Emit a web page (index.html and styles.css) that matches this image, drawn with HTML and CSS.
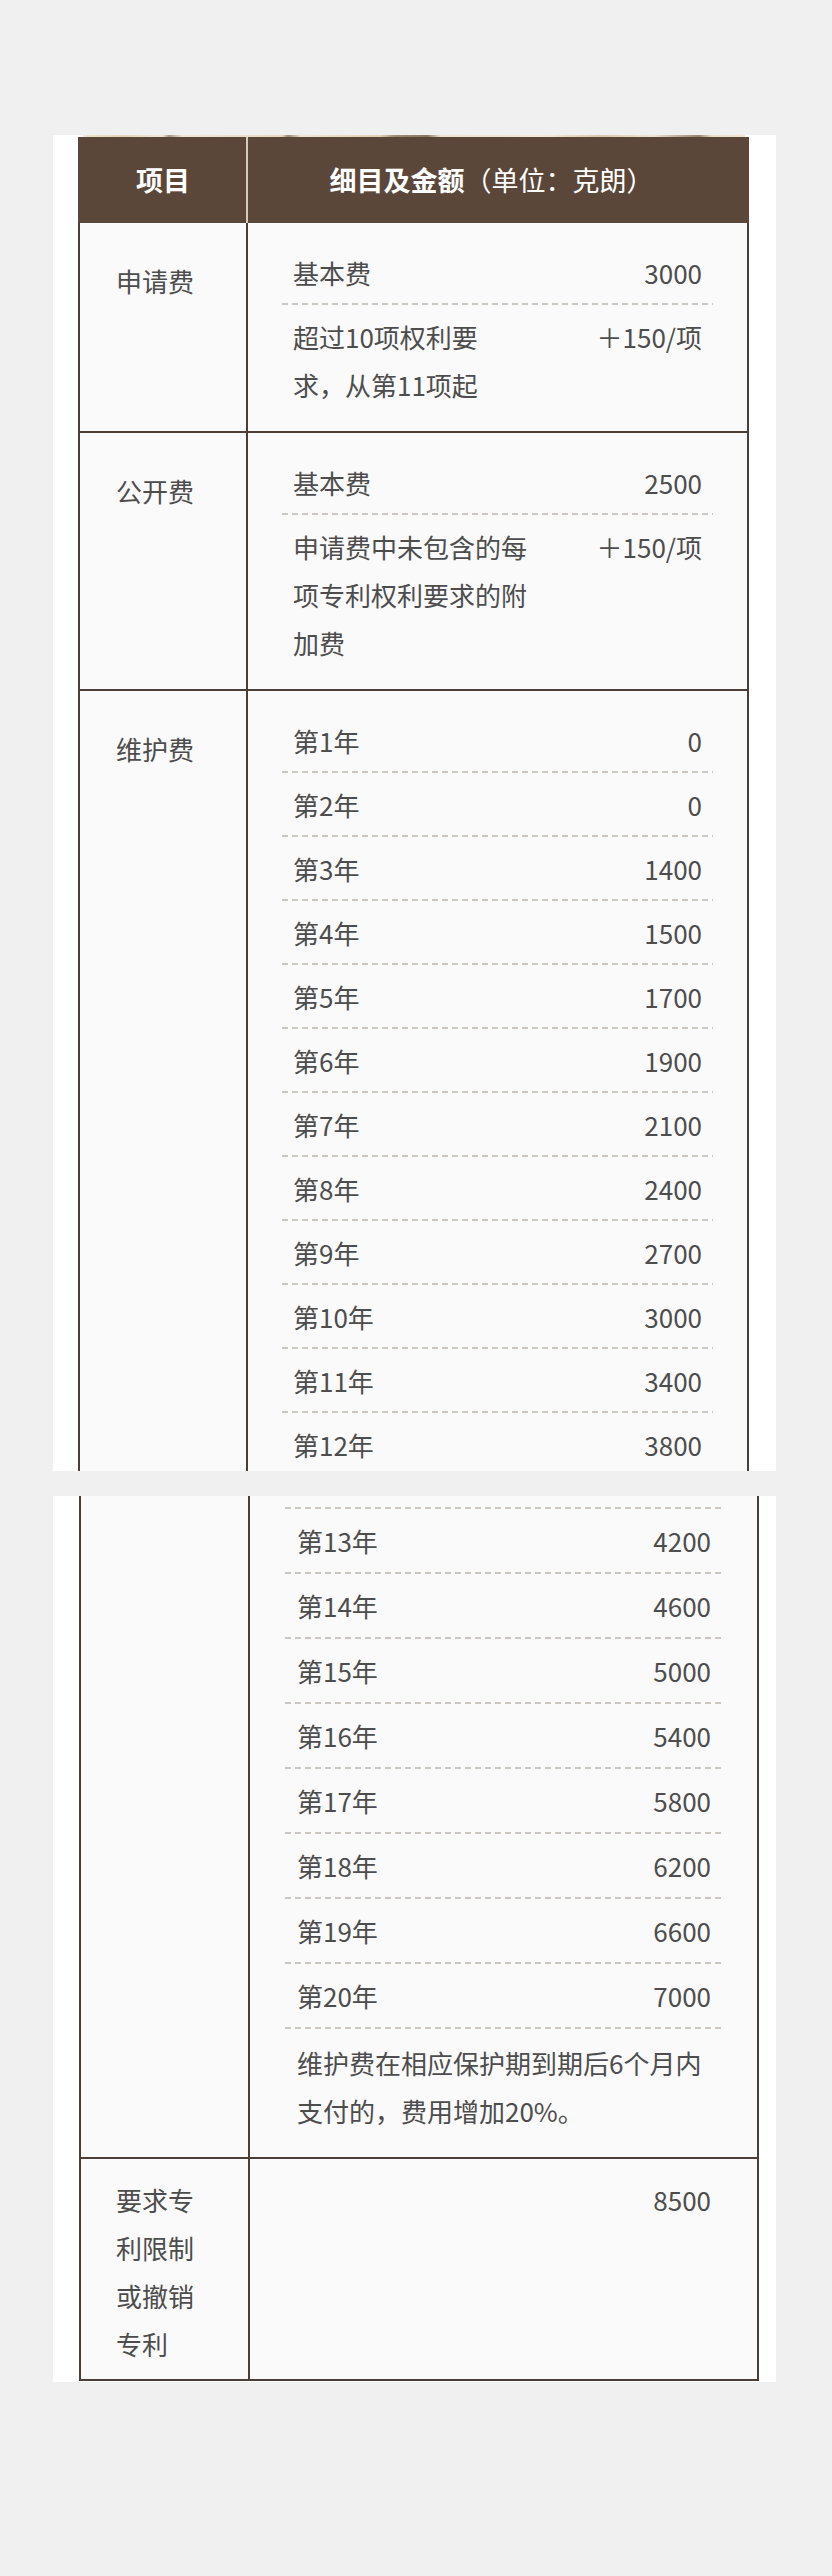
FILE: index.html
```html
<!DOCTYPE html>
<html lang="zh-CN">
<head>
<meta charset="utf-8">
<title>费用表</title>
<link rel="stylesheet" href="styles.css">
</head>
<body>
<div class="page">
  <section class="card card-top">
    <div class="strip"></div>
    <div class="table">
      <div class="thead">
        <div class="th th-item"><b>项目</b></div>
        <div class="th th-detail"><b>细目及金额</b><span class="unit">（单位：克朗）</span></div>
      </div>
      <div class="row">
        <div class="label">申请费</div>
        <div class="detail">
          <div class="item"><span class="name">基本费</span><span class="amount">3000</span></div>
          <div class="item"><span class="name">超过10项权利要<br>求，从第11项起</span><span class="amount">＋150/项</span></div>
        </div>
      </div>
      <div class="row">
        <div class="label">公开费</div>
        <div class="detail">
          <div class="item"><span class="name">基本费</span><span class="amount">2500</span></div>
          <div class="item"><span class="name">申请费中未包含的每<br>项专利权利要求的附<br>加费</span><span class="amount">＋150/项</span></div>
        </div>
      </div>
      <div class="row">
        <div class="label">维护费</div>
        <div class="detail">
          <div class="item"><span class="name">第1年</span><span class="amount">0</span></div>
          <div class="item"><span class="name">第2年</span><span class="amount">0</span></div>
          <div class="item"><span class="name">第3年</span><span class="amount">1400</span></div>
          <div class="item"><span class="name">第4年</span><span class="amount">1500</span></div>
          <div class="item"><span class="name">第5年</span><span class="amount">1700</span></div>
          <div class="item"><span class="name">第6年</span><span class="amount">1900</span></div>
          <div class="item"><span class="name">第7年</span><span class="amount">2100</span></div>
          <div class="item"><span class="name">第8年</span><span class="amount">2400</span></div>
          <div class="item"><span class="name">第9年</span><span class="amount">2700</span></div>
          <div class="item"><span class="name">第10年</span><span class="amount">3000</span></div>
          <div class="item"><span class="name">第11年</span><span class="amount">3400</span></div>
          <div class="item item-cut"><span class="name">第12年</span><span class="amount">3800</span></div>
        </div>
      </div>
    </div>
  </section>

  <section class="card card-bottom">
    <div class="table">
      <div class="row row-cont">
        <div class="label"></div>
        <div class="detail">
          <div class="dash-top"></div>
          <div class="item"><span class="name">第13年</span><span class="amount">4200</span></div>
          <div class="item"><span class="name">第14年</span><span class="amount">4600</span></div>
          <div class="item"><span class="name">第15年</span><span class="amount">5000</span></div>
          <div class="item"><span class="name">第16年</span><span class="amount">5400</span></div>
          <div class="item"><span class="name">第17年</span><span class="amount">5800</span></div>
          <div class="item"><span class="name">第18年</span><span class="amount">6200</span></div>
          <div class="item"><span class="name">第19年</span><span class="amount">6600</span></div>
          <div class="item"><span class="name">第20年</span><span class="amount">7000</span></div>
          <div class="note">维护费在相应保护期到期后6个月内<br>支付的，费用增加20%。</div>
        </div>
      </div>
      <div class="row row-last">
        <div class="label">要求专利限制或撤销专利</div>
        <div class="detail">
          <div class="item item-end"><span class="amount">8500</span></div>
        </div>
      </div>
    </div>
  </section>
</div>
</body>
</html>
```

FILE: styles.css
```css
* {
  box-sizing: border-box;
  margin: 0;
  padding: 0;
}

body {
  background: #f0f0f0;
  font-family: "Noto Sans CJK SC", "Noto Sans", sans-serif;
  color: #4d4d4d;
}

.page {
  padding-top: 135px;
  padding-bottom: 194px;
}

.card {
  margin-left: 53px;
  width: 723px;
  background: #ffffff;
}

.card-top {
  height: 1336px;
  overflow: hidden;
  padding-left: 25px;
}

.card-bottom {
  margin-top: 25px;
  padding-left: 26px;
  padding-bottom: 1px;
}

.strip {
  width: 662px;
  height: 2px;
  margin-left: 5px;
  background: linear-gradient(90deg,
    #efe4d2 0%, #e2d2b8 6%, #f3eadb 12%, #a89580 13%, #f1e7d6 15%,
    #e8dac4 30%, #9a8672 31%, #f1e6d4 33%, #e0cfb4 45%, #a08c78 47%,
    #8a7663 52%, #efe3cf 54%, #f3e9d8 70%, #d8c7ac 78%, #f1e6d4 86%,
    #96826f 93%, #ede0ca 95%, #efe4d2 100%);
}

.card-top .table {
  width: 671px;
}

.card-bottom .table {
  width: 680px;
}

.thead {
  display: flex;
  height: 86px;
  background: #5b4739;
  color: #ffffff;
}

.th {
  display: flex;
  align-items: center;
  justify-content: center;
  font-size: 27px;
  line-height: 48px;
}

.th-item {
  width: 170px;
  border-right: 2px solid #d9cbbb;
  padding-left: 2px;
}

.th-detail {
  flex: 1;
  padding-right: 14px;
}

.th b {
  font-weight: 700;
}

.unit {
  font-weight: 400;
}

.row {
  display: flex;
  background: #fafafa;
  border-left: 2px solid #4b3e36;
  border-right: 2px solid #4b3e36;
  border-bottom: 2px solid #4b3e36;
}

.label {
  width: 168px;
  flex: none;
  border-right: 2px solid #4b3e36;
  padding: 34px 40px 0 36px;
  font-size: 26px;
  line-height: 48px;
}

.detail {
  flex: 1;
  padding: 18px 34px 16px 34px;
}

.item {
  display: flex;
  justify-content: space-between;
  align-items: flex-start;
  padding: 8px 11px 6px;
  font-size: 26px;
  line-height: 48px;
}

.name {
  white-space: nowrap;
}

.amount {
  white-space: nowrap;
}

.item:not(:last-child),
.dash-top {
  padding-bottom: 8px;
  background-image: repeating-linear-gradient(90deg, #cbc8c4 0, #cbc8c4 6px, transparent 6px, transparent 10px);
  background-size: 100% 2px;
  background-position: left bottom;
  background-repeat: no-repeat;
}

.item-cut {
  padding-bottom: 40px;
}

.dash-top {
  height: 13px;
  padding-bottom: 0;
}

/* second screenshot part: slightly larger scale */
.card-bottom .label {
  width: 169px;
  padding: 17px 40px 0 35px;
}

.card-bottom .detail {
  padding: 0 34px 22px 35px;
}

.card-bottom .item {
  padding: 8px 12px 7px;
}

.card-bottom .item:not(:last-child) {
  padding-bottom: 9px;
}

.note {
  padding: 10px 12px 0;
  font-size: 26px;
  line-height: 48px;
  white-space: nowrap;
}

.row-last .label {
  padding-bottom: 11px;
}

.row-last .detail {
  padding: 9px 34px 0 35px;
}

.item-end {
  justify-content: flex-end;
}
```
